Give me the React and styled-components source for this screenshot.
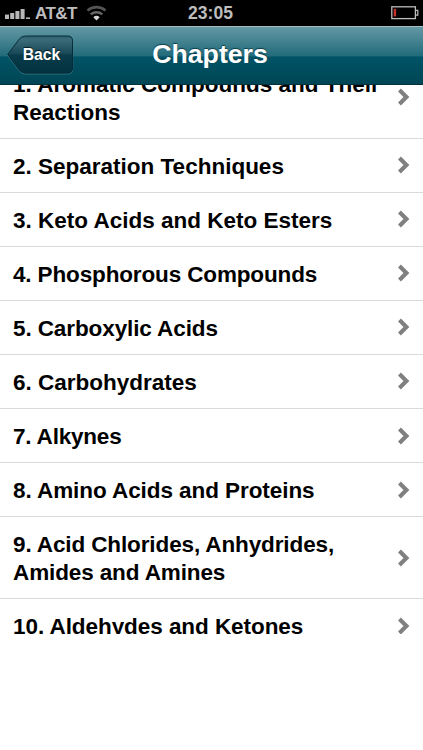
import React from 'react';
import styled, { createGlobalStyle } from 'styled-components';

const chapters = [
  { name: '1. Aromatic Compounds and Their Reactions', spacing: '0' },
  { name: '2. Separation Techniques', spacing: '0' },
  { name: '3. Keto Acids and Keto Esters', spacing: '0' },
  { name: '4. Phosphorous Compounds', spacing: '-0.14px' },
  { name: '5. Carboxylic Acids', spacing: '-0.1px' },
  { name: '6. Carbohydrates', spacing: '0' },
  { name: '7. Alkynes', spacing: '-0.2px' },
  { name: '8. Amino Acids and Proteins', spacing: '-0.07px' },
  { name: '9. Acid Chlorides, Anhydrides, Amides and Amines', spacing: '-0.12px' },
  { name: '10. Aldehydes and Ketones', spacing: '-0.06px' },
];

function StatusBar() {
  return (
    <StatusBarBox>
      <Carrier>
        <SignalIcon />
        <CarrierName>AT&amp;T</CarrierName>
        <WifiIcon />
      </Carrier>
      <Clock>23:05</Clock>
      <BatteryWrap>
        <BatteryIcon />
      </BatteryWrap>
    </StatusBarBox>
  );
}

function SignalIcon() {
  return (
    <svg width="26" height="14" viewBox="0 0 26 14" fill="#b9b9b9">
      <rect x="0" y="8.6" width="4" height="4.4" />
      <rect x="5.2" y="7" width="4" height="6" />
      <rect x="10.4" y="5" width="4" height="8" />
      <rect x="15.6" y="3" width="4" height="10" />
      <rect x="21" y="11.4" width="4" height="1.6" />
    </svg>
  );
}

function WifiIcon() {
  return (
    <svg width="22" height="16" viewBox="0 0 22 16" fill="none">
      <path d="M1.5 5.6a13.5 13.5 0 0 1 18 0" stroke="#555" strokeWidth="2.6" />
      <path d="M4.7 9.4a8.8 8.8 0 0 1 11.6 0" stroke="#666" strokeWidth="2.4" />
      <path d="M10.5 15.6l-3.2-3.4a5 5 0 0 1 6.4 0z" fill="#d6d6d6" />
    </svg>
  );
}

function BatteryIcon() {
  return (
    <svg width="28" height="14" viewBox="0 0 28 14" fill="none">
      <rect x="0.8" y="0.8" width="23.6" height="11.8" stroke="#bdbdbd" strokeWidth="1.3" />
      <path d="M24.8 4.4h2v4.7h-2" stroke="#bdbdbd" strokeWidth="1.2" />
      <rect x="2.7" y="2.8" width="2.4" height="7.6" fill="#c8322b" />
    </svg>
  );
}

function BackButton() {
  return (
    <BackBox>
      <BackShape viewBox="0 0 68 41">
        <defs>
          <linearGradient id="back" x1="0" y1="0" x2="0" y2="1">
            <stop offset="0" stopColor="#2d5f6d" />
            <stop offset="0.1" stopColor="#3b6b78" />
            <stop offset="0.48" stopColor="#194957" />
            <stop offset="0.51" stopColor="#093b4a" />
            <stop offset="1" stopColor="#033240" />
          </linearGradient>
        </defs>
        <path
          d="M0.7 20.5L12.5 4.8Q15 2 18.5 2H61Q65.7 2 65.7 6.8V34.2Q65.7 39 61 39H18.5Q15 39 12.5 36.2Z"
          fill="none"
          stroke="#5d98a4"
          strokeOpacity="0.55"
        />
        <path
          d="M0.7 19.5L12.5 3.8Q15 1 18.5 1H61Q65.5 1 65.5 5.8V33.2Q65.5 38 61 38H18.5Q15 38 12.5 35.2Z"
          fill="url(#back)"
          stroke="#062d38"
        />
      </BackShape>
      <BackText>Back</BackText>
    </BackBox>
  );
}

function ChevronIcon() {
  return (
    <svg width="12" height="18" viewBox="0 0 12 18" fill="none">
      <path d="M1.4 2L8.4 9L1.4 16" stroke="#808080" strokeWidth="4.2" />
    </svg>
  );
}

function App() {
  return (
    <Screen>
      <GlobalStyle />
      <StatusBar />
      <Header>
        <BackButton />
        <Title>Chapters</Title>
      </Header>
      <ListWindow>
        <ChapterList>
          {chapters.map(chapter => (
            <ChapterRow key={chapter.name}>
              <ChapterName $spacing={chapter.spacing}>{chapter.name}</ChapterName>
              <ChevronIcon />
            </ChapterRow>
          ))}
        </ChapterList>
      </ListWindow>
    </Screen>
  );
}

export default App;

const GlobalStyle = createGlobalStyle`
  * {
    box-sizing: border-box;
  }

  body {
    margin: 0;
    background: #ffffff;
    font-family: 'Liberation Sans', Arial, sans-serif;
  }
`;

const Screen = styled.div`
  width: 423px;
  height: 750px;
  overflow: hidden;
  background: #ffffff;
`;

const StatusBarBox = styled.div`
  display: grid;
  grid-template-columns: 1fr auto 1fr;
  align-items: center;
  height: 26px;
  padding: 0 4px 0 5px;
  background: #000000;
  color: #bdbdbd;
  font-size: 17.5px;
  font-weight: 700;
`;

const Carrier = styled.div`
  display: flex;
  align-items: center;
`;

const CarrierName = styled.span`
  margin: 2px 9px 0 4px;
  font-size: 17px;
  letter-spacing: -0.6px;
`;

const Clock = styled.span`
  padding: 1px 3px 0 0;
`;

const BatteryWrap = styled.div`
  display: flex;
  justify-content: flex-end;
`;

const Header = styled.header`
  display: grid;
  grid-template-columns: 1fr auto 1fr;
  align-items: center;
  height: 59px;
  padding: 0 3px 0 7px;
  border-top: 1px solid #a3bcc4;
  border-bottom: 1px solid #03303b;
  background: linear-gradient(
    #6498a4 0%,
    #236c7b 50%,
    #005366 53%,
    #004655 100%
  );
`;

const BackBox = styled.button`
  display: grid;
  width: 68px;
  height: 41px;
  padding: 0;
  border: 0;
  background: none;
  font-family: inherit;
`;

const BackShape = styled.svg`
  grid-area: 1 / 1;
  width: 68px;
  height: 41px;
`;

const BackText = styled.span`
  grid-area: 1 / 1;
  align-self: center;
  padding: 0 0 1px 1px;
  color: #ffffff;
  font-size: 15.7px;
  font-weight: 700;
  text-shadow: 0 -1px 1px #001a22;
`;

const Title = styled.h1`
  margin: 0;
  padding: 0 7px 3px 0;
  color: #ffffff;
  font-size: 26.7px;
  font-weight: 700;
  text-shadow: 0 -1px 1px #0b3c48;
`;

const ListWindow = styled.main`
  height: 549px;
  overflow: hidden;
`;

const ChapterList = styled.ul`
  margin: -28.5px 0 0;
  padding: 0;
  list-style: none;
`;

const ChapterRow = styled.li`
  display: flex;
  align-items: center;
  justify-content: space-between;
  padding: 13px 13px 12.1px;
  border-bottom: 1px solid #dadada;

  svg {
    margin-bottom: 1px;
  }
`;

const ChapterName = styled.span`
  width: 370px;
  padding-top: 1px;
  margin-bottom: -1px;
  color: #000000;
  font-size: 22.5px;
  font-weight: 700;
  line-height: 28px;
  letter-spacing: ${({ $spacing }) => $spacing};
`;
